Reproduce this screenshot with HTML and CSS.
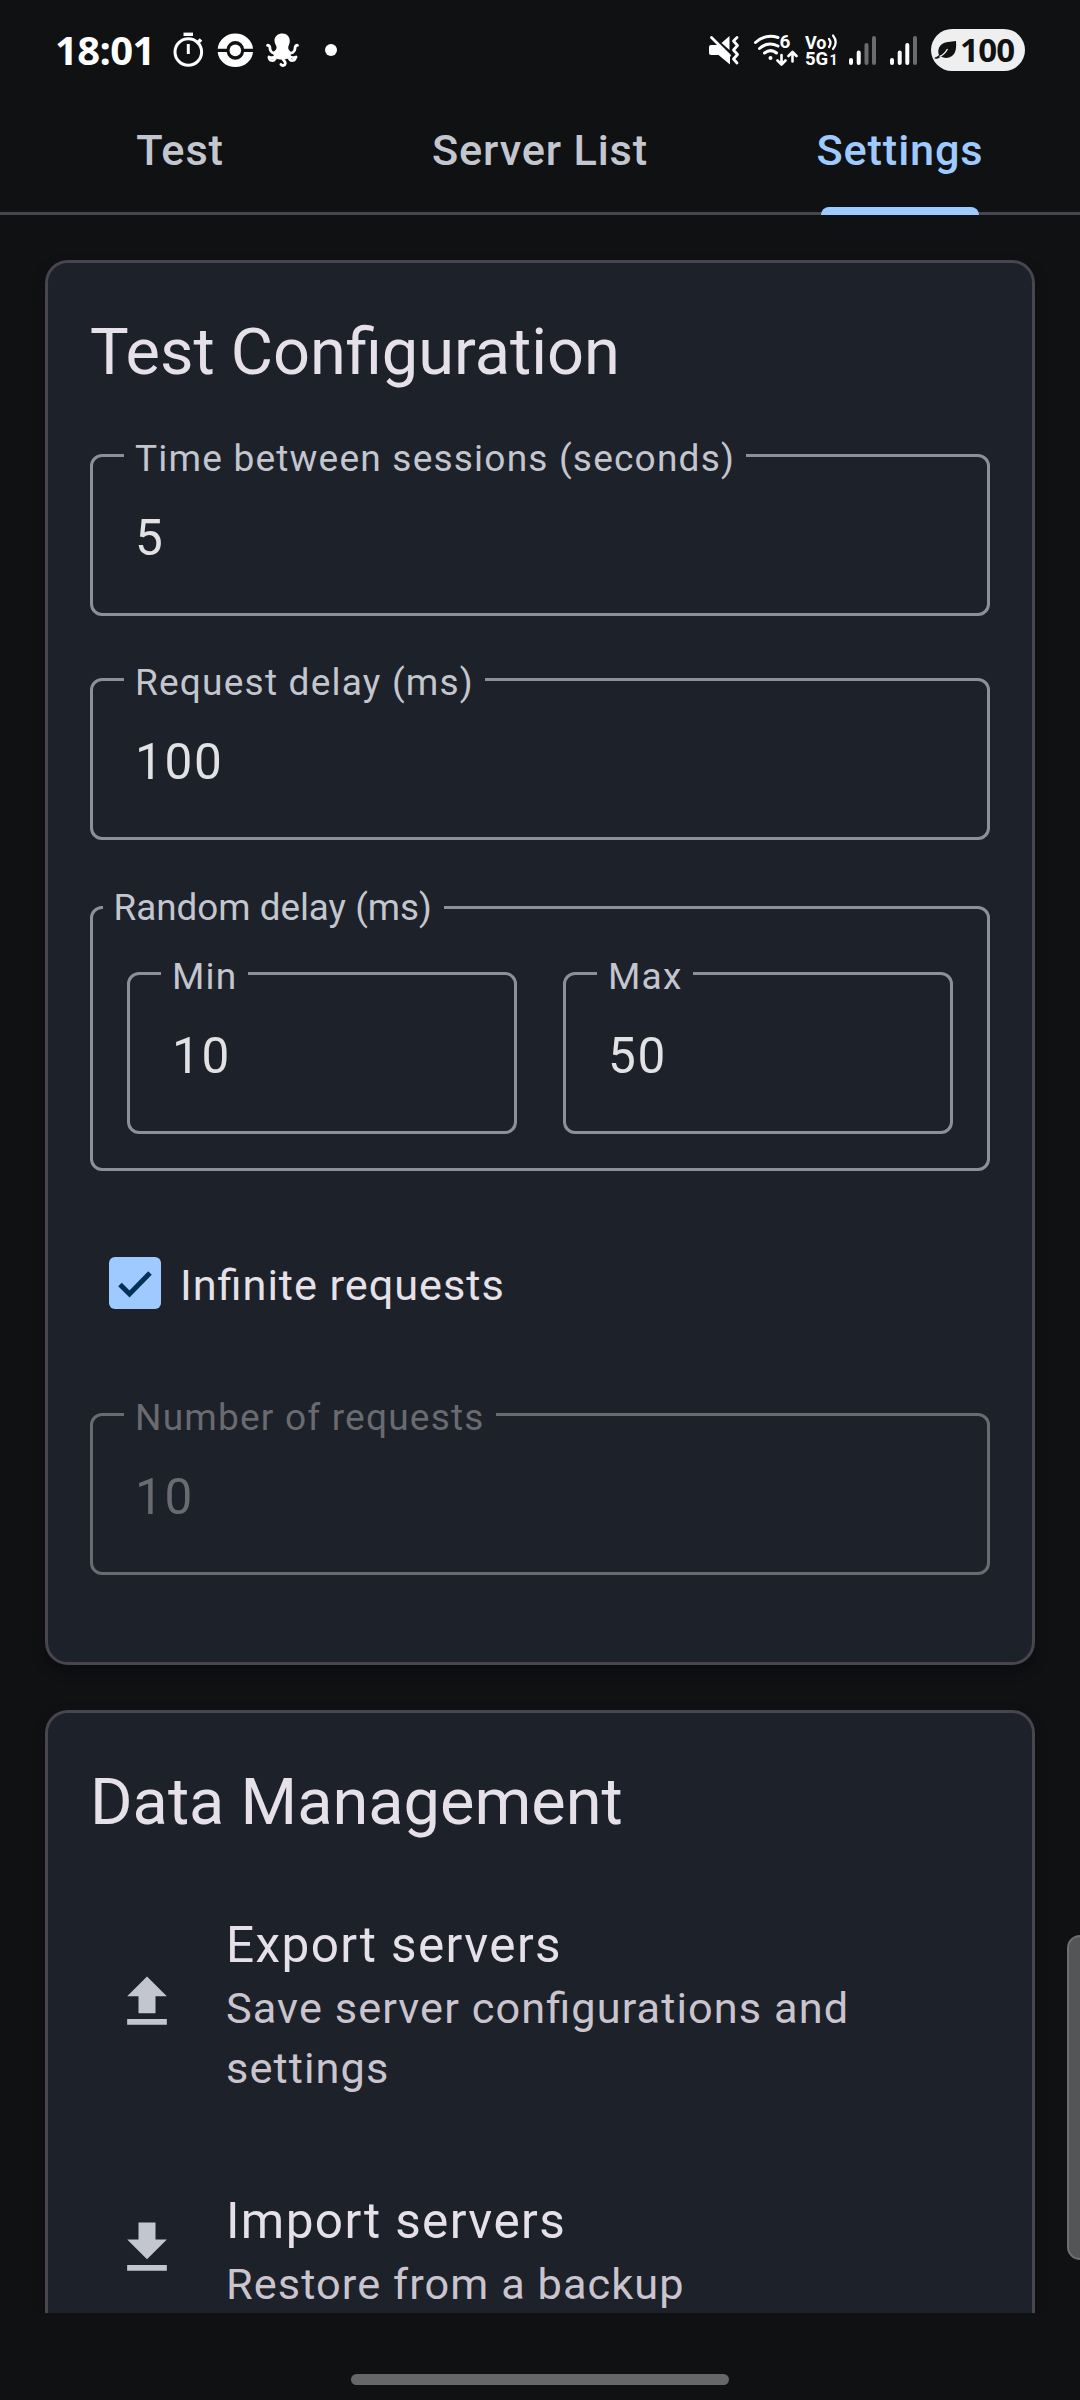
FILE: index.html
```html
<!DOCTYPE html>
<html lang="en">
<head>
<meta charset="utf-8">
<title>Settings</title>
<link rel="stylesheet" href="styles.css">
</head>
<body>
<div class="screen">
  <header class="status">
    <div class="status-left">
      <span class="clock">18:01</span>
      <svg class="ic-timer" viewBox="172 30 34 40" width="34" height="40" fill="none" stroke="#fff">
        <circle cx="188.300" cy="52" r="13.300" stroke-width="3"/>
        <path d="M183.500 34.300h9.500" stroke-width="3.400"/>
        <path d="M188.300 44v10" stroke-width="3"/>
        <path d="M197 43.500l4-4" stroke-width="3.500"/>
      </svg>
      <svg class="ic-ball" viewBox="217 31 38 38" width="38" height="38">
        <path fill="#fff" d="M217.700 48.800a17.700 16.500 0 0 1 35.300 0h-9a8.700 8.700 0 0 0-17.300 0zM217.700 52h9a8.700 8.700 0 0 0 17.300 0h9a17.700 16.300 0 0 1-35.300 0z"/>
        <circle cx="235.300" cy="50.400" r="5.800" fill="#fff"/>
      </svg>
      <svg class="ic-octo" viewBox="265 33 34 36" width="34" height="36">
        <path fill="#fff" d="M282.500 34.500c4.500 0 7.300 3.200 7.300 7.500 0 3-1.600 4.500-1.600 7 0 2 2 3 3.300 4.500l-2.500 6-5 1h-4l-5-1-2.500-6c1.800-1.500 4.300-2.500 4-5.500-.3-2-2-3.500-2-6.500 0-4.300 3.500-7 8-7z"/>
        <path fill="none" stroke="#fff" stroke-width="2.800" stroke-linecap="round" d="M277 54c-4 .8-7-1.200-7-4.200 0-2-.5-3.800-2.500-3.500M288 54c4 .8 7-1.200 7-4.200 0-2 .5-3.800 2.500-3.500M276 56.500c-1.500 2-4 2.800-7 1.500M269 58.500c.5 3.500 4.500 4 6 1.500M289 56.500c1.500 2 4 2.800 7 1.500M295.500 58.500c-.5 3.500-4.500 4-6 1.500M282.500 59c.5 2.500 3 3 2.800 5.500-.3 2.300-3.300 2.500-4.300 1"/>
      </svg>
      <span class="dot"></span>
    </div>
    <div class="status-right">
      <svg class="ic-mute" viewBox="708 34 32 32" width="32" height="32">
        <path fill="#fff" d="M711 45h7l12 10v9.500l-11.500-9.500h-7.500a2 2 0 0 1-2-2v-6a2 2 0 0 1 2-2zM729.500 36v14l-8-7z"/>
        <path fill="none" stroke="#fff" stroke-width="2.800" stroke-linecap="round" stroke-linejoin="round" d="M711.500 37.500l18 18M737 37.500l-3.500 3.500 4 4.500-4 4.500 4 4.500-4 4.500 3.500 4"/>
      </svg>
      <svg class="ic-wifi" viewBox="752 20 46 60" width="46" height="60" fill="none" stroke="#fff" stroke-linecap="round">
        <path stroke-width="3" d="M755.500 42.500c6-5.500 14-7.500 22.500-5M759.500 48.500c5-4.500 12-5.500 18.500-2.500M764.500 53c4-3 8.500-3 12 0"/>
        <circle cx="770.500" cy="58" r="2" fill="#fff" stroke="none"/>
        <path stroke-width="2.600" stroke-linejoin="round" d="M781.500 55v9M777.500 60.500l4 4 4-4M792.500 61.500v-9M788.500 56l4-4 4 4"/>
        <text class="glyph" x="779.500" y="48" font-size="19" stroke="none">6</text>
      </svg>
      <svg class="ic-volte" viewBox="804 20 36 60" width="36" height="60">
        <text class="glyph" x="805" y="48.500" font-size="18">Vo</text>
        <text class="glyph" x="805" y="65" font-size="18.500">5G</text>
        <text class="glyph" x="829.500" y="65" font-size="14">1</text>
        <path fill="none" stroke="#fff" stroke-width="2.200" stroke-linecap="round" d="M829 39q3 4 0 8M833 35.500q5.500 7 0 13.500"/>
      </svg>
      <svg class="ic-signal" viewBox="848 34 29 31" width="29" height="31" stroke-width="4" stroke-linecap="round" stroke="#fff">
        <path d="M851 59v3M858.700 51.500v10.500"/>
        <path stroke="#6b6c6d" d="M866.500 44v18M874 37v25"/>
      </svg>
      <svg class="ic-signal2" viewBox="889 34 29 31" width="29" height="31" stroke-width="4" stroke-linecap="round" stroke="#fff">
        <path d="M892 59v3M899.700 51.500v10.500M907.300 44v18"/>
        <path stroke="#6b6c6d" d="M915 37v25"/>
      </svg>
      <div class="battery">
        <svg viewBox="934 40 23 20" width="23" height="20">
          <path fill="#111214" d="M956 41c.5 7 0 12-4 15-3.500 2.500-8 2.500-11 .5-2 1.500-4 2.500-6 2.300l-.5-1.300c2-.3 3.500-1.300 4.500-2.500-1.500-4-.5-8 2.500-10.500 4-3 9-2.500 14.500-3.500z"/>
          <path fill="none" stroke="#efefef" stroke-width="1.400" d="M939.500 56.500c3-1 6-4 8-7.500"/>
        </svg>
        <span>100</span>
      </div>
    </div>
  </header>

  <nav class="tabs">
    <a class="tab">Test</a>
    <a class="tab">Server List</a>
    <a class="tab active">Settings</a>
  </nav>

  <main class="content">
    <section class="card">
      <h2 class="title">Test Configuration</h2>
      <fieldset class="field first"><legend>Time between sessions (seconds)</legend><div class="value">5</div></fieldset>
      <fieldset class="field second"><legend>Request delay (ms)</legend><div class="value">100</div></fieldset>
      <fieldset class="group">
        <legend>Random delay (ms)</legend>
        <div class="pair">
          <fieldset class="field"><legend>Min</legend><div class="value">10</div></fieldset>
          <fieldset class="field"><legend>Max</legend><div class="value">50</div></fieldset>
        </div>
      </fieldset>
      <div class="check-row">
        <span class="checkbox">
          <svg viewBox="0 0 52 52" width="52" height="52"><path d="M11 27.500l9.500 9.500 20.500-21" fill="none" stroke="#003258" stroke-width="5"/></svg>
        </span>
        <span class="check-label">Infinite requests</span>
      </div>
      <fieldset class="field disabled"><legend>Number of requests</legend><div class="value">10</div></fieldset>
    </section>

    <section class="card">
      <h2 class="title">Data Management</h2>
      <div class="list">
        <div class="item">
          <svg class="item-icon" viewBox="0 0 24 24"><path d="M9 16V10H5L12 3L19 10H15V16H9M5 20V18H19V20H5Z"/></svg>
          <div class="item-text">
            <div class="item-title">Export servers</div>
            <div class="item-desc">Save server configurations and settings</div>
          </div>
        </div>
        <div class="item">
          <svg class="item-icon" viewBox="0 0 24 24"><path d="M5 20H19V18H5M19 9H15V3H9V9H5L12 16L19 9Z"/></svg>
          <div class="item-text">
            <div class="item-title">Import servers</div>
            <div class="item-desc">Restore from a backup</div>
          </div>
        </div>
      </div>
    </section>
  </main>

  <footer class="gesture"><span class="pill"></span></footer>
  <div class="edge-handle"></div>
</div>
</body>
</html>
```
FILE: styles.css
```css
* { box-sizing: border-box; }
body {
  margin: 0;
  background: #101113;
  font-family: Roboto, sans-serif;
  font-feature-settings: "liga" 1;
}
.screen {
  position: relative;
  display: flex;
  flex-direction: column;
  width: 1080px;
  height: 2400px;
  overflow: hidden;
}

/* Status bar */
.status {
  display: flex;
  justify-content: space-between;
  height: 100px;
  padding: 0 55px 0 55px;
}
.status-left, .status-right { display: flex; align-items: center; height: 100px; }
.status svg { display: block; flex: none; }
.clock {
  width: 117px;
  font: 700 40px/50px "Open Sans", sans-serif;
  letter-spacing: -0.6px;
  color: #fff;
}
.ic-ball { margin-left: 11px; }
.ic-octo { margin-left: 10px; }
.dot { width: 12px; height: 12px; margin-left: 26px; border-radius: 50%; background: #fff; }
.ic-wifi { margin-left: 12px; }
.ic-volte { margin-left: 6px; }
.ic-signal { margin-left: 8px; }
.ic-signal2 { margin-left: 12px; }
.glyph { font-family: Roboto, sans-serif; font-weight: 700; fill: #fff; }
.battery {
  display: flex;
  align-items: center;
  width: 94px;
  height: 42px;
  margin-left: 13px;
  padding-left: 3px;
  gap: 3px;
  border-radius: 21px;
  background: #efefef;
  color: #111214;
  font: 700 33px/42px "Open Sans", sans-serif;
  letter-spacing: -0.7px;
}

/* Tabs */
.tabs {
  display: grid;
  grid-template-columns: repeat(3, 1fr);
  height: 115px;
  border-bottom: 3px solid #49454f;
}
.tab {
  position: relative;
  padding-top: 21px;
  text-align: center;
  font-size: 43.300px;
  line-height: 60px;
  font-weight: 500;
  letter-spacing: 0.850px;
  color: #c3c6cf;
}
.tab.active { color: #9ecaff; }
.tab.active::after {
  content: "";
  position: absolute;
  left: 101px;
  bottom: -3px;
  width: 158px;
  height: 8px;
  border-radius: 8px 8px 0 0;
  background: #9ecaff;
}

/* Scrolling content */
.content {
  display: flex;
  flex-direction: column;
  gap: 45px;
  height: 2098px;
  padding: 45px;
  overflow: hidden;
}
.card {
  flex: none;
  padding: 49px 42px 87px;
  border: 3px solid #49454f;
  border-radius: 23px;
  background: #1d2129;
  box-shadow: 0 6px 14px rgba(0, 0, 0, 0.3);
}
.title {
  margin: 0;
  font-size: 64.900px;
  line-height: 80px;
  font-weight: 400;
  color: #e6e1e9;
}

/* Outlined fields; the legend cuts the notch in the border */
.field, .group {
  min-width: 0;
  margin: 0;
  border: 3px solid #8c9199;
  border-radius: 12px;
}
.field { height: 182px; padding: 0 31px; }
.first, .second { margin-top: 42px; }
.field > legend {
  height: 43px;
  padding: 6px 11px 0;
  font-size: 37.100px;
  line-height: 37px;
  letter-spacing: 1.180px;
  color: #c3c6cf;
}
.value {
  padding: 32px 11px 0;
  font-size: 49.500px;
  line-height: 58px;
  letter-spacing: 1.700px;
  color: #e2e2e5;
}
.group { height: 285px; margin-top: 46px; padding: 0 9.500px; }
.group > legend {
  height: 43px;
  padding: 0 12px 0 11px;
  font-size: 36.800px;
  line-height: 43px;
  color: #c3c6cf;
}
.pair {
  display: grid;
  grid-template-columns: 1fr 1fr;
  gap: 46px;
  padding: 23px 24.500px 0;
}
.check-row {
  display: flex;
  gap: 19px;
  margin: 86px 0 84px;
  padding-left: 19px;
}
.checkbox {
  width: 52px;
  height: 52px;
  border-radius: 6px;
  background: #9ecaff;
}
.checkbox svg { display: block; }
.check-label {
  padding-top: 3px;
  height: 52px;
  font-size: 43.300px;
  line-height: 52px;
  letter-spacing: 0.950px;
  color: #e6e1e9;
}
.disabled { border-color: #696b70; }
.disabled > legend, .disabled > .value { color: #696b70; }

/* Data management list */
.list { display: flex; flex-direction: column; gap: 89px; padding-top: 70px; }
.item { display: flex; align-items: center; gap: 45px; padding-left: 23px; }
.item-icon { flex: none; width: 68px; height: 68px; margin-bottom: 7px; fill: #c3c6cf; }
.item-title {
  font-size: 49.500px;
  line-height: 67px;
  letter-spacing: 1.400px;
  color: #e6e1e9;
}
.item-desc {
  font-size: 43.300px;
  line-height: 60px;
  letter-spacing: 1.080px;
  color: #cac4cf;
}

/* System overlays */
.gesture { display: flex; justify-content: center; height: 87px; padding-top: 61px; }
.pill { width: 378px; height: 11px; border-radius: 6px; background: #666769; }
.edge-handle {
  position: absolute;
  left: 1067px;
  top: 1935px;
  width: 30px;
  height: 325px;
  border: 2px solid #6e6f70;
  border-radius: 13px;
  background: #545556;
}
```
